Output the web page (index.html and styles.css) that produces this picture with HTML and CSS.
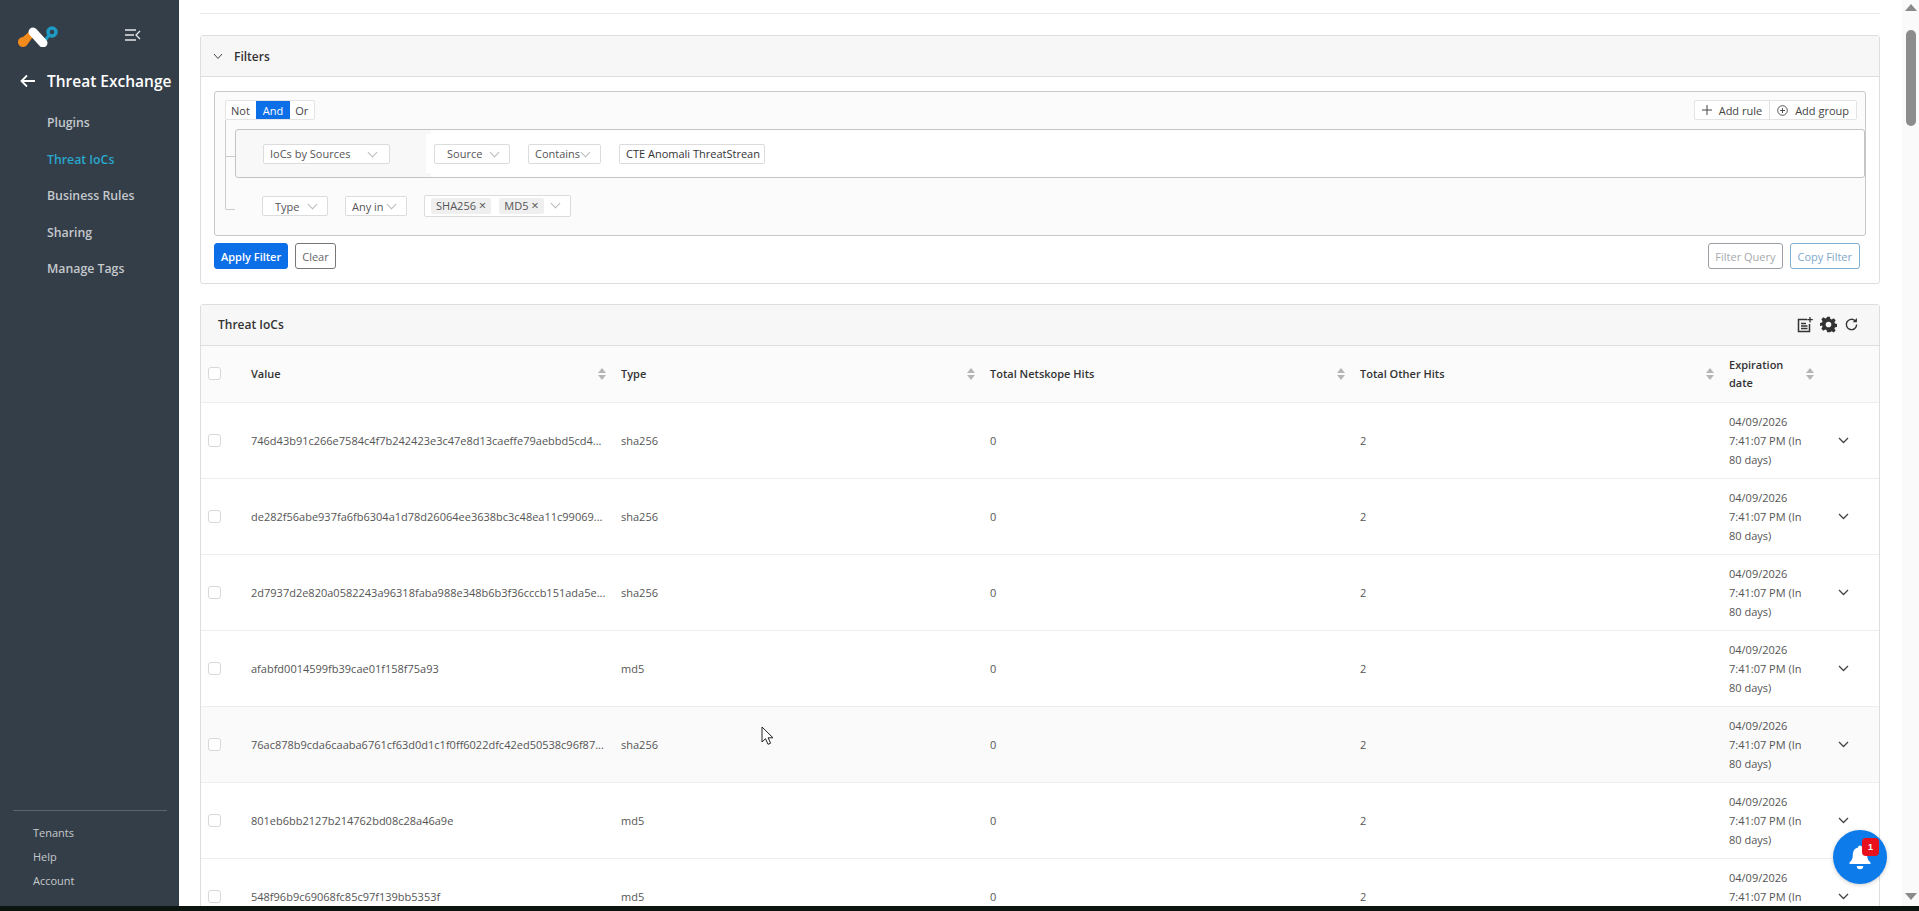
FILE: index.html
```html
<!DOCTYPE html>
<html lang="en">
<head>
    <meta charset="UTF-8">
    <title>Threat IoCs</title>
    <link rel="stylesheet" href="styles.css">
</head>
<body>
    <div class="app">
        <aside class="sidebar">
            <div class="brand">
                <svg class="logo" width="42" height="24" viewBox="0 0 42 24">
                    <path d="M6 14a5 5 0 1 0 4 8l8-11-4-4z" fill="#f28a1c"/>
                    <path d="M26 20 L33 11" stroke="#1e9bc4" stroke-width="3" fill="none"/>
                    <path d="M16 9 L26 20" stroke="#fff" stroke-width="9" stroke-linecap="round" fill="none"/>
                    <circle cx="35" cy="9" r="4" fill="none" stroke="#1e9bc4" stroke-width="3.500"/>
                </svg>
                <svg class="collapse" width="16" height="12" viewBox="0 0 16 12">
                    <path d="M0 1h11M0 6h9M0 11h11M15 2l-4 4 4 4" stroke="#e4e6e8" stroke-width="1.300" fill="none"/>
                </svg>
            </div>
            <div class="section-title">
                <svg width="16" height="14" viewBox="0 0 16 14"><path d="M15 7H2M7 1.500 1.500 7 7 12.500" stroke="#fff" stroke-width="1.800" fill="none"/></svg>
                <span>Threat Exchange</span>
            </div>
            <nav class="side-nav">
                <a>Plugins</a>
                <a class="active">Threat IoCs</a>
                <a>Business Rules</a>
                <a>Sharing</a>
                <a>Manage Tags</a>
            </nav>
            <div class="side-foot">
                <a>Tenants</a>
                <a>Help</a>
                <a>Account</a>
            </div>
        </aside>

        <main class="content">
            <div class="top-rule"></div>

            <section class="card filters">
                <header class="card-head filters-head">
                    <svg width="10" height="7" viewBox="0 0 10 7"><path d="M1 1l4 4.500L9 1" stroke="#444" stroke-width="1" fill="none"/></svg>
                    <span>Filters</span>
                </header>
                <div class="filters-body">
                    <div class="query">
                        <i class="tree"></i>
                        <div class="query-top">
                            <div class="logic">
                                <span>Not</span><span class="on">And</span><span>Or</span>
                            </div>
                            <div class="adders">
                                <span class="adder">
                                    <svg width="10" height="10" viewBox="0 0 10 10"><path d="M5 0v10M0 5h10" stroke="#444" stroke-width="1" fill="none"/></svg>
                                    Add rule
                                </span>
                                <span class="adder">
                                    <svg width="11" height="11" viewBox="0 0 11 11"><circle cx="5.500" cy="5.500" r="4.800" stroke="#444" fill="none" stroke-width=".9"/><path d="M5.500 3v5M3 5.500h5" stroke="#444" stroke-width=".9"/></svg>
                                    Add group
                                </span>
                            </div>
                        </div>
                        <div class="rule-group">
                            <span class="select wide">IoCs by Sources<i class="caret"></i></span>
                            <div class="rule-white">
                                <span class="select src">Source<i class="caret"></i></span>
                                <span class="select op">Contains<i class="caret"></i></span>
                                <span class="select val">CTE Anomali ThreatStrean</span>
                            </div>
                        </div>
                        <div class="rule">
                            <span class="select typ">Type<i class="caret"></i></span>
                            <span class="select any">Any in<i class="caret"></i></span>
                            <span class="select tags">
                                <span class="tag">SHA256 <b>×</b></span>
                                <span class="tag">MD5 <b>×</b></span>
                                <i class="caret"></i>
                            </span>
                        </div>
                    </div>
                    <div class="actions">
                        <button class="btn primary">Apply Filter</button>
                        <button class="btn dark">Clear</button>
                        <span class="spacer"></span>
                        <button class="btn muted">Filter Query</button>
                        <button class="btn copy">Copy Filter</button>
                    </div>
                </div>
            </section>

            <section class="card iocs">
                <header class="card-head iocs-head">
                    <span>Threat IoCs</span>
                    <div class="tools">
                        <svg width="16" height="16" viewBox="0 0 16 16"><path d="M10 2.500H1.500v12h11V7" fill="none" stroke="#333" stroke-width="1.500"/><path d="M4 6.500h5M4 9h6.500M4 11.500h6.500" stroke="#333" stroke-width="1.300"/><path d="M13 0v5.500M10.300 2.700h5.500" stroke="#333" stroke-width="1.300"/></svg>
                        <svg width="17" height="17" viewBox="0 0 24 24"><path fill="#333" fill-rule="evenodd" d="M10 1h4l.7 3.100 1.900.8 2.700-1.700 2.800 2.800-1.700 2.700.8 1.900 3.100.7v4l-3.100.7-.8 1.900 1.700 2.700-2.800 2.800-2.700-1.700-1.900.8L14 23h-4l-.7-3.100-1.900-.8-2.700 1.700-2.800-2.800 1.700-2.700-.8-1.900L-.3 14v-4l3.100-.7.8-1.900-1.700-2.700 2.800-2.800 2.700 1.700 1.900-.8zM12 8a4 4 0 1 0 0 8 4 4 0 0 0 0-8z"/></svg>
                        <svg width="15" height="15" viewBox="0 0 16 16"><path d="M13.500 8a5.500 5.500 0 1 1-1.700-4" fill="none" stroke="#333" stroke-width="1.500"/><path d="M13.800 1v4.500H9.300z" fill="#333"/></svg>
                    </div>
                </header>
                <table class="grid">
                    <colgroup>
                        <col class="c-check"><col class="c-value"><col class="c-type"><col class="c-hits"><col class="c-other"><col class="c-exp"><col class="c-more">
                    </colgroup>
                    <thead>
                        <tr>
                            <th><i class="check"></i></th>
                            <th><div class="th-in">Value<i class="sort"></i></div></th>
                            <th><div class="th-in">Type<i class="sort"></i></div></th>
                            <th><div class="th-in">Total Netskope Hits<i class="sort"></i></div></th>
                            <th><div class="th-in">Total Other Hits<i class="sort"></i></div></th>
                            <th><div class="th-in exp">Expiration<br>date<i class="sort"></i></div></th>
                            <th></th>
                        </tr>
                    </thead>
                    <tbody>
                        <tr>
                            <td><i class="check"></i></td>
                            <td>746d43b91c266e7584c4f7b242423e3c47e8d13caeffe79aebbd5cd4...</td>
                            <td>sha256</td><td>0</td><td>2</td>
                            <td>04/09/2026<br>7:41:07 PM (In<br>80 days)</td>
                            <td><svg class="chev" width="11" height="7" viewBox="0 0 11 7"><path d="M1 1l4.500 4.500L10 1" stroke="#444" stroke-width="1.300" fill="none"/></svg></td>
                        </tr>
                        <tr>
                            <td><i class="check"></i></td>
                            <td>de282f56abe937fa6fb6304a1d78d26064ee3638bc3c48ea11c99069...</td>
                            <td>sha256</td><td>0</td><td>2</td>
                            <td>04/09/2026<br>7:41:07 PM (In<br>80 days)</td>
                            <td><svg class="chev" width="11" height="7" viewBox="0 0 11 7"><path d="M1 1l4.500 4.500L10 1" stroke="#444" stroke-width="1.300" fill="none"/></svg></td>
                        </tr>
                        <tr>
                            <td><i class="check"></i></td>
                            <td>2d7937d2e820a0582243a96318faba988e348b6b3f36cccb151ada5e...</td>
                            <td>sha256</td><td>0</td><td>2</td>
                            <td>04/09/2026<br>7:41:07 PM (In<br>80 days)</td>
                            <td><svg class="chev" width="11" height="7" viewBox="0 0 11 7"><path d="M1 1l4.500 4.500L10 1" stroke="#444" stroke-width="1.300" fill="none"/></svg></td>
                        </tr>
                        <tr>
                            <td><i class="check"></i></td>
                            <td>afabfd0014599fb39cae01f158f75a93</td>
                            <td>md5</td><td>0</td><td>2</td>
                            <td>04/09/2026<br>7:41:07 PM (In<br>80 days)</td>
                            <td><svg class="chev" width="11" height="7" viewBox="0 0 11 7"><path d="M1 1l4.500 4.500L10 1" stroke="#444" stroke-width="1.300" fill="none"/></svg></td>
                        </tr>
                        <tr class="hover">
                            <td><i class="check"></i></td>
                            <td>76ac878b9cda6caaba6761cf63d0d1c1f0ff6022dfc42ed50538c96f87...</td>
                            <td>sha256</td><td>0</td><td>2</td>
                            <td>04/09/2026<br>7:41:07 PM (In<br>80 days)</td>
                            <td><svg class="chev" width="11" height="7" viewBox="0 0 11 7"><path d="M1 1l4.500 4.500L10 1" stroke="#444" stroke-width="1.300" fill="none"/></svg></td>
                        </tr>
                        <tr>
                            <td><i class="check"></i></td>
                            <td>801eb6bb2127b214762bd08c28a46a9e</td>
                            <td>md5</td><td>0</td><td>2</td>
                            <td>04/09/2026<br>7:41:07 PM (In<br>80 days)</td>
                            <td><svg class="chev" width="11" height="7" viewBox="0 0 11 7"><path d="M1 1l4.500 4.500L10 1" stroke="#444" stroke-width="1.300" fill="none"/></svg></td>
                        </tr>
                        <tr>
                            <td><i class="check"></i></td>
                            <td>548f96b9c69068fc85c97f139bb5353f</td>
                            <td>md5</td><td>0</td><td>2</td>
                            <td>04/09/2026<br>7:41:07 PM (In<br>80 days)</td>
                            <td><svg class="chev" width="11" height="7" viewBox="0 0 11 7"><path d="M1 1l4.500 4.500L10 1" stroke="#444" stroke-width="1.300" fill="none"/></svg></td>
                        </tr>
                    </tbody>
                </table>
            </section>
        </main>

        <div class="scrollbar">
            <i class="arrow up"></i>
            <div class="thumb"></div>
            <span class="spacer"></span>
            <i class="arrow down"></i>
        </div>
    </div>
    <div class="taskbar-edge"></div>

    <button class="notify">
        <svg width="24" height="26" viewBox="0 0 24 26"><path fill="#fff" d="M12 1.500a2 2 0 0 1 2 2c3.600.9 5.200 3.800 5.200 7.500 0 3.500 1 5.700 3.300 7.600v1.400h-21v-1.400C3.800 16.700 4.800 14.500 4.800 11c0-3.700 1.600-6.600 5.200-7.500a2 2 0 0 1 2-2zM8.800 22h6.400a3.200 3.200 0 0 1-6.400 0z"/></svg>
        <span class="badge">1</span>
    </button>

    <svg class="cursor" width="14" height="20" viewBox="0 0 14 20">
        <path d="M1 1v15l3.500-3.300 2.500 5.600 2.600-1.100-2.500-5.400H12z" fill="#fff" stroke="#222" stroke-width="1"/>
    </svg>
</body>
</html>
```

FILE: styles.css
```css
* {
    box-sizing: border-box;
}

html, body {
    height: 100%;
}

body {
    margin: 0;
    overflow: hidden;
    background: #fff;
    color: #444;
    font-family: "Open Sans", "Noto Sans", sans-serif;
    font-size: 11px;
}

.app {
    display: flex;
    height: 906px;
    overflow: hidden;
}

.taskbar-edge {
    height: 5px;
    background: #0c1410;
}

/* sidebar */
.sidebar {
    width: 179px;
    flex: none;
    display: flex;
    flex-direction: column;
    background: #343e48;
    color: #c5c9cd;
}

.brand {
    display: flex;
    align-items: center;
    height: 46px;
    padding: 24px 0 0 17px;
}

.collapse {
    margin-left: 66px;
}

.section-title {
    display: flex;
    align-items: center;
    height: 30px;
    margin-top: 20px;
    padding-left: 20px;
    color: #fff;
    font-size: 15.500px;
    font-weight: 600;
    white-space: nowrap;
}

.section-title span {
    margin-left: 11px;
}

.side-nav {
    display: flex;
    flex-direction: column;
    gap: 17px;
    margin-top: 17px;
    padding-left: 47px;
    font-size: 12.300px;
    font-weight: 600;
}

.side-nav a {
    line-height: 19.500px;
}

.side-nav .active {
    color: #2aa7cd;
}

.side-foot {
    display: flex;
    flex-direction: column;
    gap: 7px;
    margin: auto 12px 0 13px;
    padding: 13px 0 17px 20px;
    border-top: 1px solid #5b666e;
}

.side-foot a {
    line-height: 17px;
}

/* main column */
.content {
    flex: 1;
    min-width: 0;
    padding: 0 22px 0 21px;
    overflow: hidden;
}

.top-rule {
    height: 14px;
    border-bottom: 1px solid #e8e8e8;
}

.card {
    border: 1px solid #dedede;
    border-radius: 3px;
    background: #fff;
}

.card-head {
    display: flex;
    align-items: center;
    background: #f7f7f7;
    border-bottom: 1px solid #dedede;
    color: #333;
    font-size: 12px;
    font-weight: 600;
}

.filters {
    height: 249px;
    margin-top: 21px;
}

.filters-head {
    gap: 11px;
    height: 41px;
    padding-left: 12px;
}

.filters-body {
    padding: 14px 13px 0;
}

.query {
    position: relative;
    height: 145px;
    padding: 8px 8px 0 10px;
    border: 1px solid #c8c8c8;
    border-radius: 3px;
    background: #fbfbfb;
}

/* connector between the logic buttons and the rules */
.tree {
    position: absolute;
    left: 10px;
    top: 28px;
    width: 10px;
    height: 90px;
    border-left: 1px solid #ccc;
    border-bottom: 1px solid #ccc;
    border-bottom-left-radius: 2px;
}

.tree::after {
    content: '';
    position: absolute;
    left: 0;
    top: 36px;
    width: 10px;
    border-top: 1px solid #ccc;
}

.query-top {
    display: flex;
    justify-content: space-between;
    height: 20px;
}

.logic, .adders {
    display: flex;
    align-items: center;
    border: 1px solid #e4e4e4;
    border-radius: 2px;
    background: #fff;
    color: #444;
}

.logic span {
    display: flex;
    align-items: center;
    height: 100%;
    padding: 0 6px 0 5px;
}

.logic .on {
    padding: 0 7px;
    background: #0d6fe8;
    color: #fff;
}

.adder {
    display: flex;
    align-items: center;
    gap: 7px;
    height: 100%;
    padding: 0 7px;
}

.adder + .adder {
    border-left: 1px solid #e0e0e0;
}

.rule-group {
    position: relative;
    display: flex;
    align-items: center;
    height: 49px;
    margin: 9px -8px 0 10px;
    padding-left: 27px;
    border: 1px solid #c4c4c4;
    border-radius: 3px;
    background: linear-gradient(to right, #f8f8f8, #f8f8f8 12%, #fff 12%);
}

.rule-white {
    display: flex;
    align-items: center;
    gap: 18px;
    height: 39px;
    margin-left: 36px;
    padding-left: 8px;
    background: #fff;
}

.rule {
    display: flex;
    align-items: center;
    gap: 17px;
    height: 22px;
    margin: 17px 0 0 37px;
}

.select {
    position: relative;
    display: inline-flex;
    align-items: center;
    height: 20px;
    padding-left: 6px;
    border: 1px solid #dcdcdc;
    border-radius: 2px;
    background: #fff;
    color: #555;
    white-space: nowrap;
}

.caret {
    position: absolute;
    right: 11px;
    top: 4px;
    width: 7px;
    height: 7px;
    border-right: 1px solid #bbb;
    border-bottom: 1px solid #bbb;
    transform: rotate(45deg);
}

.wide { width: 127px; }
.wide .caret { right: 13px; }
.src { width: 76px; padding-left: 12px; }
.op { width: 73px; }
.val { width: 146px; color: #333; }
.typ { width: 66px; padding-left: 12px; }
.any { width: 62px; }

.tags {
    width: 147px;
    height: 22px;
    gap: 8px;
    padding-left: 6px;
}

.tag {
    padding: 1px 5px;
    background: #efefef;
    border-radius: 2px;
    line-height: 14px;
}

.tag b {
    font-weight: 400;
    font-size: 13px;
    line-height: 10px;
}

.actions {
    display: flex;
    align-items: center;
    gap: 7px;
    margin-top: 7px;
}

.spacer {
    flex: 1;
}

.btn {
    height: 26px;
    padding: 0 6px;
    border: 1px solid #777;
    border-radius: 3px;
    background: #fff;
    font: inherit;
    white-space: nowrap;
}

.btn.primary {
    background: #0d6fe8;
    border-color: #0d6fe8;
    color: #fff;
    font-weight: 600;
}

.btn.dark {
    color: #666;
}

.btn.muted {
    border-color: #9aa0a6;
    color: #a5a9ad;
}

.btn.copy {
    margin-right: 6px;
    padding: 0 7px;
    border-color: #7fb0cf;
    color: #7ea8cb;
}

/* ioc table */
.iocs {
    margin-top: 20px;
}

.iocs-head {
    justify-content: space-between;
    height: 41px;
    padding: 0 20px 2px 17px;
}

.tools {
    display: flex;
    align-items: center;
    gap: 7px;
    margin-bottom: -1px;
}

.grid {
    width: 100%;
    table-layout: fixed;
    border-collapse: collapse;
}

.c-check { width: 49px; }
.c-value { width: 370px; }
.c-type { width: 369px; }
.c-hits { width: 370px; }
.c-other { width: 369px; }
.c-exp { width: 106px; }

th {
    height: 56px;
    padding: 0 0 0 1px;
    background: #fbfbfb;
    border-bottom: 1px solid #eee;
    color: #333;
    font-weight: 600;
    text-align: left;
    line-height: 18px;
}

td {
    height: 76px;
    padding: 0 0 0 1px;
    border-bottom: 1px solid #eee;
    line-height: 19px;
    color: #555;
    white-space: nowrap;
    overflow: hidden;
}

th:first-child, td:first-child {
    padding-left: 7px;
}

tr.hover td {
    background: #fafafa;
}

.th-in {
    position: relative;
    padding-right: 20px;
}

.sort {
    position: absolute;
    right: 14px;
    top: 50%;
    margin-top: -6px;
    width: 8px;
    height: 12px;
}

.sort::before, .sort::after {
    content: '';
    position: absolute;
    left: 0;
    border-left: 4px solid transparent;
    border-right: 4px solid transparent;
}

.sort::before {
    top: 0;
    border-bottom: 5px solid #b5b5b5;
}

.sort::after {
    bottom: 0;
    border-top: 5px solid #b5b5b5;
}

.exp .sort {
    right: 20px;
}

.check {
    display: block;
    width: 13px;
    height: 13px;
    border: 1px solid #d8d8d8;
    border-radius: 3px;
    background: #fff;
}

.chev {
    display: block;
    margin-left: 3px;
}

/* fake scrollbar strip */
.scrollbar {
    width: 17px;
    flex: none;
    display: flex;
    flex-direction: column;
    align-items: center;
    padding: 4px 0 6px;
    background: #fafafa;
}

.thumb {
    width: 10px;
    height: 96px;
    margin-top: 19px;
    border-radius: 5px;
    background: #8c8c8c;
}

.arrow {
    width: 0;
    height: 0;
    border-left: 6px solid transparent;
    border-right: 6px solid transparent;
}

.arrow.up {
    border-bottom: 7px solid #8a8a8a;
}

.arrow.down {
    border-top: 7px solid #8a8a8a;
}

/* overlays */
.notify {
    position: absolute;
    left: 1833px;
    top: 830px;
    display: flex;
    align-items: center;
    justify-content: center;
    width: 54px;
    height: 54px;
    padding: 0;
    border: 0;
    border-radius: 50%;
    background: #0d7bea;
    box-shadow: 0 1px 4px rgba(0, 0, 0, .2);
}

.badge {
    position: absolute;
    top: 8px;
    right: 8px;
    width: 17px;
    height: 18px;
    border-radius: 4px;
    background: #e8101c;
    color: #fff;
    font-size: 9px;
    font-weight: 700;
    line-height: 18px;
    text-align: center;
}

.cursor {
    position: absolute;
    left: 761px;
    top: 726px;
}
```
